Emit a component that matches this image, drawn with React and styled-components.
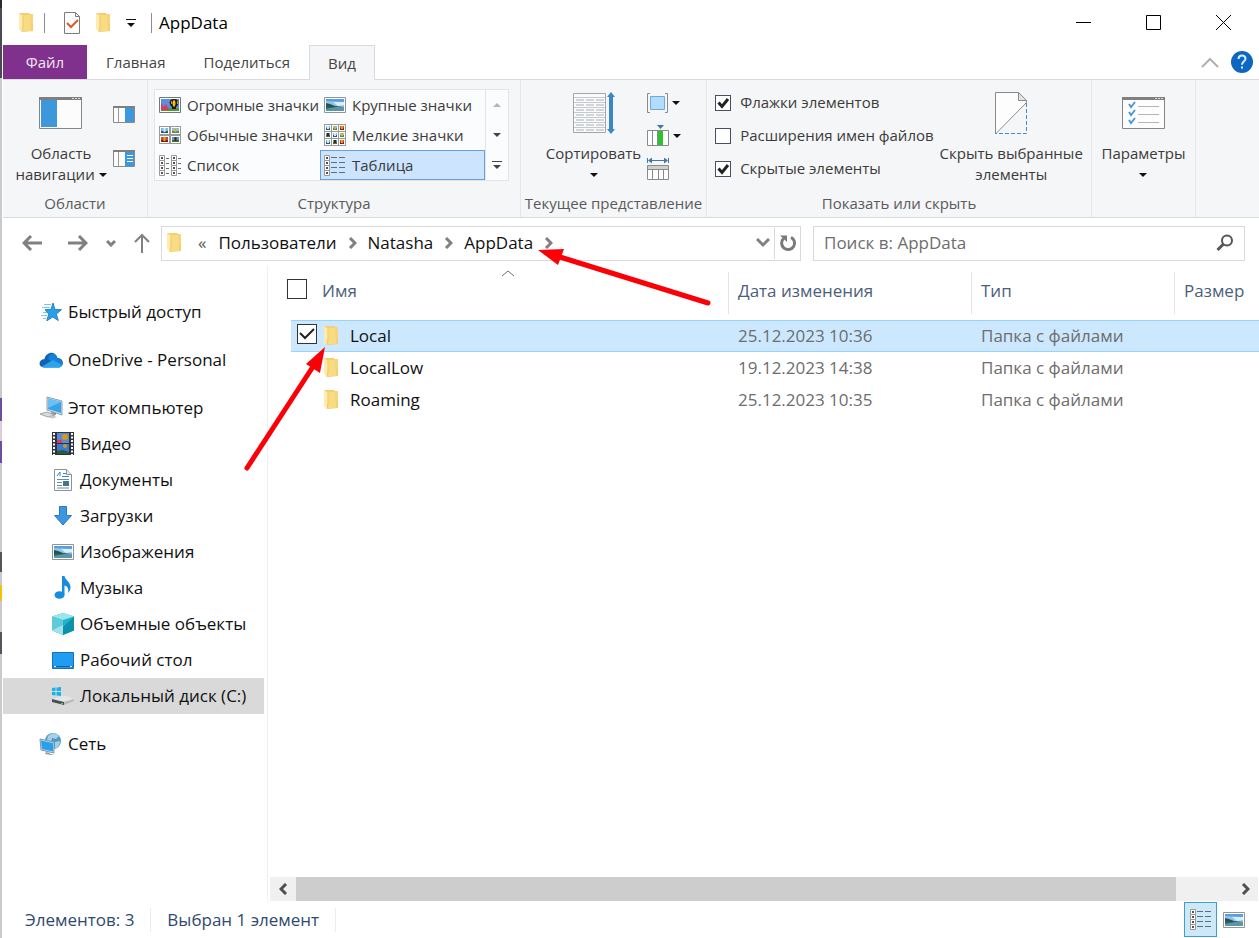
import React from 'react';
import styled, { createGlobalStyle, css } from 'styled-components';

const GlobalStyle = createGlobalStyle`
  *, *::before, *::after { box-sizing: border-box; }
  body {
    margin: 0;
    background: #fff;
    color: #111;
    font: 17px/24px "Open Sans", "Noto Sans", sans-serif;
  }
  button, input { font: inherit; color: inherit; }
  button { padding: 0; border: 0; background: none; cursor: default; }
  a { color: inherit; text-decoration: none; cursor: default; }
  svg { display: block; flex: none; }
`;

/* ---------- Window frame ---------- */

const Frame = styled.div`
  position: relative;
  display: grid;
  grid-template-columns: 3px minmax(0, 1fr);
  min-height: 100vh;
  overflow: hidden;
`;

const DesktopEdge = styled.div`
  margin-right: 1px;
  background: linear-gradient(
    #2b2b2f 0 8px, #4a4a52 8px 78px, #c9cacd 78px 398px,
    #6b4f9c 398px 421px, #d6cfdc 421px 441px, #6b4f9c 441px 463px,
    #c9cacd 463px 552px, #55565c 552px 572px, #c9cacd 572px 585px,
    #f2c20d 585px 601px, #c9cacd 601px 632px, #55565c 632px 654px,
    #c9cacd 654px
  );
`;

const Window = styled.div`
  display: flex;
  flex-direction: column;
  min-width: 0;
`;

/* ---------- Title bar ---------- */

const TitleBar = styled.header`
  display: flex;
  align-items: center;
  height: 45px;
  padding: 0 1px 0 12px;
`;

const QuickAccess = styled.div`
  display: flex;
  align-items: center;
`;

const QuickButton = styled.button`
  display: grid;
  place-items: center;
  width: ${(p) => p.$width}px;
  height: 28px;
`;

const TitleRule = styled.span`
  width: 1px;
  height: 20px;
  background: #8c8c8c;
`;

const Title = styled.h1`
  flex: 1;
  margin: 0 0 0 2px;
  font-size: 17px;
  font-weight: 400;
  line-height: 24px;
  color: #000;
`;

const WindowButton = styled.button`
  display: grid;
  place-items: center;
  width: 70px;
  height: 45px;
`;

/* ---------- Tabs ---------- */

const TabBar = styled.nav`
  display: flex;
  height: 35px;
  padding-right: 6px;
  font-size: 15px;
  border-bottom: 1px solid #dadbdc;
`;

const Tab = styled.button`
  height: 34px;
  padding: 0 19px;
  color: #444;
  ${(p) => p.$file && css`
    width: 84px;
    color: #f3e6f5;
    background: #80308d;
  `}
  ${(p) => p.$active && css`
    height: 35px;
    border: 1px solid #dadbdc;
    border-bottom: 0;
    padding: 0 18px;
    background: #f5f6f7;
  `}
`;

const TabTools = styled.div`
  display: flex;
  align-items: center;
  gap: 12px;
  margin-left: auto;
`;

/* ---------- Ribbon ---------- */

const Ribbon = styled.section`
  display: flex;
  height: 138px;
  font-size: 15px;
  line-height: 21px;
  color: #3b3b3b;
  background: #f5f6f7;
  border-bottom: 1px solid #dadbdc;
`;

const Group = styled.div`
  display: flex;
  flex-direction: column;
  flex: none;
  width: ${(p) => p.$width}px;
  border-right: 1px solid #e4e6e8;
`;

const GroupBody = styled.div`
  display: flex;
  justify-content: ${(p) => (p.$start ? 'flex-start' : 'center')};
  flex: 1;
  gap: ${(p) => p.$gap || 0}px;
  padding: ${(p) => p.$top || 12}px 0 0 ${(p) => p.$start || 0}px;
`;

const GroupLabel = styled.div`
  height: 24px;
  text-align: center;
  white-space: nowrap;
  color: #5a5a5a;
`;

const BigButton = styled.button`
  display: flex;
  flex-direction: column;
  align-items: center;
  align-self: flex-start;
  gap: 9px;
  white-space: nowrap;
`;

const BigIcon = styled.span`
  display: grid;
  place-items: center;
  height: 42px;
`;

const BigText = styled.span`
  display: block;
  svg { display: inline-block; vertical-align: 3px; }
`;

const SmallStack = styled.div`
  display: flex;
  flex-direction: column;
  gap: ${(p) => p.$gap}px;
  padding-top: ${(p) => p.$top || 0}px;
`;

const SmallButton = styled.button`
  display: flex;
  align-items: center;
  gap: 4px;
  height: 22px;
`;

const Gallery = styled.div`
  display: grid;
  grid-template-columns: 165px 165px 23px;
  height: 92px;
  background: #fbfcfd;
  border: 1px solid #e2e4e7;
`;

const GalleryColumn = styled.div`
  display: grid;
  grid-template-rows: repeat(3, 30px);
`;

const GalleryItem = styled.button`
  display: flex;
  align-items: center;
  gap: 6px;
  padding-left: 3px;
  white-space: nowrap;
  border: 1px solid transparent;
  ${(p) => p.$selected && css`
    background: #cce4fd;
    border-color: #6a9fdc;
  `}
`;

const GalleryScroll = styled.div`
  display: grid;
  grid-template-rows: repeat(3, 30px);
  border-left: 1px solid #e2e4e7;
`;

const ScrollCell = styled.button`
  display: grid;
  place-items: center;
`;

const Options = styled.div`
  display: flex;
  flex-direction: column;
  gap: 12px;
`;

const Option = styled.label`
  display: flex;
  align-items: center;
  gap: 9px;
  height: 21px;
  white-space: nowrap;
`;

const CheckShell = styled.span`
  display: inline-grid;
  vertical-align: top;
  width: ${(p) => p.$size}px;
  height: ${(p) => p.$size}px;
  > * { grid-area: 1 / 1; }
  svg { pointer-events: none; place-self: center; }
`;

const CheckInput = styled.input`
  appearance: none;
  width: 100%;
  height: 100%;
  margin: 0;
  background: #fff;
  border: 1px solid ${(p) => p.$line};
`;

/* ---------- Address row ---------- */

const AddressRow = styled.div`
  display: grid;
  grid-template-columns: 146px minmax(0, 640fr) minmax(0, 432fr);
  column-gap: 12px;
  align-items: center;
  height: 48px;
  padding: 2px 14px 0 0;
`;

const NavButtons = styled.div`
  display: flex;
  align-items: center;
  gap: 18px;
  padding-left: 19px;
`;

const HistoryButtons = styled.div`
  display: flex;
  gap: 26px;
`;

const IconButton = styled.button`
  display: grid;
  place-items: center;
  height: 32px;
  min-width: ${(p) => p.$width || 0}px;
`;

const AddressBox = styled.div`
  display: flex;
  align-items: center;
  height: 35px;
  padding-left: 1px;
  border: 1px solid #d9d9d9;
`;

const Crumbs = styled.div`
  display: flex;
  align-items: center;
  flex: 1;
  min-width: 0;
  white-space: nowrap;
`;

const Earlier = styled.span`
  margin: 0 12px 0 11px;
  color: #555;
`;

const CrumbArrow = styled.span`
  display: grid;
  place-items: center;
  width: 31px;
`;

const RefreshButton = styled.button`
  display: grid;
  place-items: center;
  width: 26px;
  height: 31px;
  border-left: 1px solid #d9d9d9;
`;

const SearchBox = styled.label`
  display: flex;
  align-items: center;
  height: 35px;
  padding: 0 10px;
  border: 1px solid #d9d9d9;
`;

const SearchInput = styled.input`
  flex: 1;
  min-width: 0;
  padding: 0;
  border: 0;
  outline: 0;
  background: none;
  &::placeholder { color: #6d6d6d; opacity: 1; }
`;

/* ---------- Main area ---------- */

const Main = styled.main`
  display: grid;
  grid-template-columns: 265px minmax(0, 1fr);
  flex: 1;
`;

const Sidebar = styled.nav`
  display: flex;
  flex-direction: column;
  gap: 12px;
  padding: 28px 3px 0 0;
  border-right: 1px solid #f0f0f0;
`;

const SideGroup = styled.div`
  display: flex;
  flex-direction: column;
`;

const SideItem = styled.a`
  display: flex;
  align-items: center;
  gap: 5px;
  height: 36px;
  padding-left: ${(p) => (p.$child ? 48 : 36)}px;
  white-space: nowrap;
  background: ${(p) => (p.$selected ? '#d9d9d9' : 'transparent')};
`;

const SideIcon = styled.span`
  display: grid;
  place-items: center;
  width: 24px;
  height: 24px;
`;

const Content = styled.section`
  display: flex;
  flex-direction: column;
  min-width: 0;
`;

const SortMark = styled.div`
  display: flex;
  height: 6px;
  padding-left: 234px;
  svg { margin-top: 4px; }
`;

const ListArea = styled.div`
  flex: 1;
  padding-left: 19px;
`;

const FileTable = styled.table`
  width: 100%;
  table-layout: fixed;
  border-collapse: separate;
  border-spacing: 0;
`;

const HeadCell = styled.th`
  height: 48px;
  padding: 0 0 10px ${(p) => p.$pad}px;
  font-weight: 400;
  text-align: left;
  white-space: nowrap;
  color: #4c607a;
  background: ${(p) => (p.$ruled ? 'linear-gradient(#e5e5e5, #e5e5e5) 0 0 / 1px 42px no-repeat' : 'none')};
`;

const FileRow = styled.tr`
  > td {
    background-color: ${(p) => (p.$selected ? '#cce8ff' : 'transparent')};
    box-shadow: ${(p) => (p.$selected ? 'inset 0 1px #99d1ff, inset 0 -1px #99d1ff' : 'none')};
  }
`;

const Cell = styled.td`
  height: 32px;
  padding: 0 0 0 ${(p) => p.$pad}px;
  white-space: nowrap;
  color: ${(p) => (p.$name ? '#111' : '#6d6d6d')};
`;

const CheckCell = styled(Cell)`
  border-left: 4px solid transparent;
  background-clip: padding-box;
`;

const NameLine = styled.span`
  display: flex;
  align-items: center;
  gap: 6px;
`;

const ScrollBar = styled.div`
  display: flex;
  align-items: center;
  height: 24px;
  margin: 0 1px 1px 2px;
  background: #f0f0f0;
`;

const ScrollArrow = styled.button`
  display: grid;
  place-items: center;
  width: 26px;
  height: 24px;
`;

const ScrollTrack = styled.div`
  flex: 1;
  height: 24px;
`;

const ScrollThumb = styled.div`
  width: 94%;
  height: 24px;
  background: #cdcdcd;
`;

/* ---------- Status bar ---------- */

const StatusBar = styled.footer`
  display: flex;
  align-items: center;
  height: 36px;
  padding: 0 9px 0 22px;
  color: #2f4a6d;
`;

const StatusText = styled.span`
  padding-right: 16px;
  margin-right: 16px;
  border-right: 1px solid #ececec;
  white-space: nowrap;
`;

const ViewButtons = styled.div`
  display: flex;
  margin-left: auto;
  align-self: stretch;
`;

const ViewButton = styled.button`
  display: grid;
  place-items: center;
  width: 33px;
  height: 35px;
  border: 1px solid ${(p) => (p.$selected ? '#3d9fc9' : 'transparent')};
  background: ${(p) => (p.$selected ? '#cde8f6' : 'transparent')};
`;

const Annotations = styled.svg`
  position: absolute;
  top: 0;
  left: 0;
  pointer-events: none;
`;

/* ---------- Icons ---------- */

const Folder = () => (
  <svg width="24" height="24" viewBox="0 0 24 24">
    <path d="M4 2h10l1 1h3v17l-10 1z" fill="#f3cf70" />
    <path d="M8 4h8v16H8z" fill="#f9db84" />
    <path d="M15 3h3v10l-3 1z" fill="#f6d57b" />
    <path d="M4 2l4 3v10l-1 6-3-3z" fill="#fdebb0" />
    <path d="M8 5v10l-1 6" fill="none" stroke="#edc964" />
  </svg>
);

const CheckedDoc = () => (
  <svg width="18" height="24" viewBox="0 0 18 24">
    <path d="M1.500 1.500h11l4 4v17h-15z" fill="#fcfcfc" stroke="#7c7c7c" />
    <path d="M12.500 1.500v4h4" fill="none" stroke="#7c7c7c" />
    <path d="M4 12l4 4 7-7" fill="none" stroke="#dd5a28" strokeWidth="2" />
  </svg>
);

const Caret = ({ color = '#111' }) => (
  <svg width="8" height="4" viewBox="0 0 8 4"><path d="M0 0h8L4 4z" fill={color} /></svg>
);

const CaretUp = () => (
  <svg width="8" height="4" viewBox="0 0 8 4"><path d="M0 4h8L4 0z" fill="#b5b5b5" /></svg>
);

const BarCaret = ({ color = '#111' }) => (
  <svg width="10" height="8" viewBox="0 0 10 8">
    <path d="M0 0h10v1H0zM1 4h8L5 8z" fill={color} />
  </svg>
);

const Chevron = ({ d, w, h, color = '#808080', stroke = 3 }) => (
  <svg width={w} height={h} viewBox={`0 0 ${w} ${h}`}>
    <path d={d} fill="none" stroke={color} strokeWidth={stroke} />
  </svg>
);

const Tick = ({ size }) => (
  <svg width={size} height={size} viewBox={`0 0 ${size} ${size}`}>
    <path
      d={size === 16 ? 'M3.500 7.500l3.500 4 6-7.500' : 'M3 9l5 5 9-9'}
      fill="none"
      stroke="#222"
      strokeWidth={size === 16 ? 3 : 2}
    />
  </svg>
);

const NavPane = () => (
  <svg width="43" height="32" viewBox="0 0 43 32">
    <path d="M.5 1.500h42v30H.5z" fill="#fcfcfc" stroke="#868686" />
    <path d="M0 0h43v3H0z" fill="#7f7f7f" />
    <path d="M33 1h2v1h-2zM36 1h2v1h-2zM39 1h2v1h-2z" fill="#ddd" />
    <path d="M2 3h16v27H2z" fill="#3d97dc" />
  </svg>
);

const SidePane = ({ details }) => (
  <svg width="22" height="17" viewBox="0 0 22 17">
    <path d="M.5.5h21v16H.5z" fill="#fcfcfc" stroke="#8a8a8a" />
    <path d="M0 0h22v2H0z" fill="#7f7f7f" />
    <path d="M5.500 2v14" stroke="#999" />
    <path d="M12 2h9v14h-9z" fill="#3d97dc" />
    {details && <path d="M14 5.500h6M14 8.500h6M14 11.500h6" stroke="#fff" />}
  </svg>
);

const Landscape = () => (
  <svg width="22" height="16" viewBox="0 0 22 16">
    <path d="M.5.5h21v15H.5z" fill="#fff" stroke="#8e959c" />
    <path d="M2 2h18v12H2z" fill="#8fc4ef" />
    <path d="M2 2h18v3L2 4z" fill="#5a9ede" />
    <path d="M9 5h11v3l-6 1z" fill="#dceefa" />
    <path d="M2 6l4 1 5 2 9 1v1H2z" fill="#24564f" />
    <path d="M2 10h18v4H2z" fill="#5e95a3" />
    <path d="M2 10h10l-10 2z" fill="#2f6a68" />
  </svg>
);

const HugeIcon = () => (
  <svg width="22" height="16" viewBox="0 0 22 16">
    <path d="M.5.5h21v15H.5z" fill="#fff" stroke="#777" />
    <path d="M2 2h18v12H2z" fill="#5a8fe0" />
    <path d="M2 11h18v3H2z" fill="#4b9a3b" />
    <path d="M2 6l3 4 2-3 3 6H2z" fill="#d93b58" />
    <path d="M15 2c6 0 5 6 2 8v2h-4v-2c-3-2-4-8 2-8z" fill="#23190d" />
    <path d="M15 3c2 1 2 5 0 7-2-2-2-6 0-7z" fill="#f5c51d" />
    <path d="M12 4h1v3h-1zM18 4h1v3h-1z" fill="#e58d1a" />
  </svg>
);

/* A framed thumbnail: sky, ground and a highlight in the middle. */
const Thumb = ({ x, y, w, h, fills }) => (
  <g>
    <rect x={x + 0.5} y={y + 0.5} width={w - 1} height={h - 1} fill="#fff" stroke="#9a9a9a" />
    <rect x={x + 2} y={y + 2} width={w - 4} height={h - 4} fill={fills[0]} />
    <rect x={x + 2} y={y + h - 4} width={w - 4} height="2" fill={fills[1]} />
    <rect x={x + w / 2 - 1} y={y + 2} width="2" height={h - 5} fill={fills[2]} />
  </g>
);

const sky = ['#7db8e8', '#2f5d63', '#d5ebf9'];
const meadow = ['#8fc0dd', '#5f8a3c', '#c9b54a'];
const poppy = ['#d4452a', '#7d2016', '#f09a1e'];
const balloon = ['#5f93d8', '#4a6f2c', '#3a2c12'];

const Tiles2 = () => (
  <svg width="22" height="18" viewBox="0 0 22 18">
    <Thumb x={0} y={0} w={11} h={9} fills={sky} />
    <Thumb x={11} y={0} w={11} h={9} fills={meadow} />
    <Thumb x={0} y={9} w={11} h={9} fills={poppy} />
    <Thumb x={11} y={9} w={11} h={9} fills={balloon} />
  </svg>
);

const Tiles3 = () => (
  <svg width="22" height="22" viewBox="0 0 22 22">
    {[[sky, meadow, poppy], [balloon, sky, meadow], [sky, balloon, poppy]].map((row, r) =>
      row.map((fills, c) => (
        <Thumb key={`${r}${c}`} x={c * 7} y={r * 7} w={8} h={8} fills={fills} />
      )))}
  </svg>
);

const DotColumn = ({ x }) => (
  <g>
    {[0, 1, 2, 3].map((i) => (
      <g key={i}>
        <path d={`M${x + 0.5} ${i * 5 + 0.5}h5v5h-5z`} fill="#fff" stroke="#999" />
        <path d={`M${x + 2} ${i * 5 + 2}h2v2h-2z`} fill="#5a5050" />
      </g>
    ))}
  </g>
);

const ListIcon = () => (
  <svg width="22" height="21" viewBox="0 0 22 21">
    <DotColumn x={0} />
    <DotColumn x={12} />
    <path d="M7 3.500h3M7 8.500h3M7 13.500h3M7 18.500h3M19 3.500h3M19 8.500h3M19 13.500h3M19 18.500h3" stroke="#6d6d6d" />
  </svg>
);

const DetailsIcon = () => (
  <svg width="22" height="21" viewBox="0 0 22 21">
    <DotColumn x={0} />
    <path d="M7 2.500h6M15 2.500h6M7 7.500h6M15 7.500h6M7 12.500h6M15 12.500h6M7 17.500h6M15 17.500h6" stroke="#5b6f80" />
  </svg>
);

const SortIcon = () => (
  <svg width="42" height="42" viewBox="0 0 42 42">
    <path d="M.5 1.500h32v39H.5z" fill="#fafafa" stroke="#a5a5a5" />
    <path d="M1 5.500h31M1 10.500h31M1 15.500h31M1 20.500h31M1 25.500h31M1 30.500h31M1 35.500h31" stroke="#c3c9ce" />
    <path d="M3 8h8M13 8h8M23 8h8M3 13h8M13 13h8M23 13h8M3 18h8M13 18h8M23 18h8M3 23h8M13 23h8M23 23h8M3 28h8M13 28h8M23 28h8M3 33h8M13 33h8M23 33h8M3 38h8M13 38h8M23 38h8" stroke="#a9b0b4" />
    <path d="M38 0l4 5h-2v32h2l-4 5-4-5h2V5h-2z" fill="#3a86c8" />
  </svg>
);

const GroupByIcon = () => (
  <svg width="21" height="20" viewBox="0 0 21 20">
    <path d="M3 .5H.5v19H3M18 .5h2.500v19H18" fill="none" stroke="#8a8a8a" />
    <path d="M3.500 3.500h14v13h-14z" fill="#b1dcfb" stroke="#6fa9d8" />
  </svg>
);

const AddColumnIcon = () => (
  <svg width="22" height="22" viewBox="0 0 22 22">
    <path d="M.5 5.500h21v15H.5zM5.500 6v15M10.500 6v15" fill="#fff" stroke="#8a8a8a" />
    <path d="M11 6h5v14h-5z" fill="#2bc52b" />
    <path d="M10 0h7l-3.500 4z" fill="#3f77ad" />
  </svg>
);

const FitColumnsIcon = () => (
  <svg width="22" height="22" viewBox="0 0 22 22">
    <path d="M.5 0v5M21.500 0v5M2 2.500h18" stroke="#3f77ad" />
    <path d="M1 2.500l4-3v6zM21 2.500l-4-3v6z" fill="#3f77ad" />
    <path d="M.5 7.500h21v14H.5zM5.500 11v10M11.500 11v10M16.500 11v10" fill="#fff" stroke="#8a8a8a" />
    <path d="M1 8h20v3H1z" fill="#cfcfcf" />
    <path d="M0 11.500h22" stroke="#8a8a8a" />
  </svg>
);

const HideIcon = () => (
  <svg width="33" height="43" viewBox="0 0 33 43">
    <path d="M.5.5h23l8 8v2L.5 42z" fill="#fdfdfd" stroke="#8a8a8a" />
    <path d="M23.500.5v8h8z" fill="#e4e4e4" stroke="#8a8a8a" />
    <path d="M31.500 11v30.500H1" fill="none" stroke="#3f8fd0" strokeDasharray="4 2" />
  </svg>
);

const OptionsIcon = () => (
  <svg width="43" height="32" viewBox="0 0 43 32">
    <path d="M.5.5h42v31H.5z" fill="#fdfdfd" stroke="#868686" />
    <path d="M0 0h43v3H0z" fill="#7f7f7f" />
    <path d="M33 1h2v1h-2zM36 1h2v1h-2zM39 1h2v1h-2z" fill="#ddd" />
    <path d="M16 9.500h21M16 17.500h21M16 25.500h21" stroke="#b5b5b5" />
    <path d="M7 7l2 3 4-5M7 15l2 3 4-5M7 23l2 3 4-5" fill="none" stroke="#4a9bdc" strokeWidth="2" />
  </svg>
);

const HelpIcon = () => (
  <svg width="22" height="22" viewBox="0 0 22 22">
    <circle cx="11" cy="11" r="11" fill="#0d66bf" />
    <path d="M7.500 8c0-4.500 7-4.500 7-.3 0 2.800-3.500 3-3.500 6" fill="none" stroke="#d8ecff" strokeWidth="2" />
    <path d="M10 15.500h2v2h-2z" fill="#d8ecff" />
  </svg>
);

const Arrow = ({ d, w = 20, h = 16, stroke = 3 }) => (
  <svg width={w} height={h} viewBox={`0 0 ${w} ${h}`}>
    <path d={d} fill="none" stroke="#808080" strokeWidth={stroke} />
  </svg>
);

const Refresh = () => (
  <svg width="18" height="18" viewBox="0 0 18 18">
    <path d="M12 3.300A6.500 6.500 0 1 1 4.500 4.500" fill="none" stroke="#7a7a7a" strokeWidth="3" />
    <path d="M1 1.500h7v6.500z" fill="#7a7a7a" />
  </svg>
);

const Magnifier = () => (
  <svg width="18" height="18" viewBox="0 0 18 18">
    <circle cx="11" cy="6.500" r="5" fill="none" stroke="#555" strokeWidth="2" />
    <path d="M7.500 10l-6 6" stroke="#555" strokeWidth="3" />
  </svg>
);

const Star = () => (
  <svg width="24" height="24" viewBox="0 0 24 24">
    <path d="M14 3l2 6.500 6.500.2-5.200 4.300 2 6.500-5.500-3.500-6 3.800 2-6.800L6 9.700l6-.3z" fill="#2d9ee6" stroke="#1f86cc" />
    <path d="M5 4.500h7M3 7.500h8M4 12.500h4M2 15.500h6M4 18.500h3" stroke="#7cc6f2" />
  </svg>
);

const Cloud = () => (
  <svg width="24" height="24" viewBox="0 0 24 24">
    <path d="M5.500 11C7 4 16 2 18.500 10c7 0 7 9.500 1 9.500H5C-1 19.500-1 11.500 5.500 11z" fill="#0f62b8" />
    <path d="M10 8c3-5 8-1 8.500 2.500C24 11 24 17 21 19L9 11z" fill="#1581d6" />
    <path d="M3 18.500L14 12l9 5c-1 2-2 2.500-3.500 2.500H5c-1 0-1.500-.5-2-1z" fill="#2ba3ee" />
  </svg>
);

const Computer = () => (
  <svg width="24" height="24" viewBox="0 0 24 24">
    <path d="M8 1l15 4v14L8 14z" fill="#d3d8dc" stroke="#8ba3b8" />
    <path d="M9 2.500L22 6v11L9 13z" fill="#35a2ea" />
    <path d="M9 2.500L22 6 9 12z" fill="#69c2f5" />
    <path d="M12 16l5 1v2l-5-1z" fill="#8c9094" />
    <path d="M1 18l7-2 8 3-7 2z" fill="#dadada" stroke="#a4a4a4" />
    <path d="M10 21l5-1 3 1-5 1.500z" fill="#c0c0c0" />
  </svg>
);

const Video = () => (
  <svg width="22" height="24" viewBox="0 0 22 24">
    <path d="M0 0h22v23H0z" fill="#30343a" />
    <path d="M5 1h12v10H5z" fill="#5a8ad6" />
    <path d="M5 12h12v10H5z" fill="#3d78d4" />
    <path d="M5 8h5v3H5z" fill="#d93b68" />
    <circle cx="13" cy="5" r="3" fill="#d49a18" />
    <path d="M5 19l6-1 6 2v2H5z" fill="#255c3c" />
    <circle cx="13" cy="14" r="2" fill="#c39c1f" />
    <path d="M2 1v22M20 1v22" stroke="#fff" strokeWidth="2" strokeDasharray="2 1.500" />
  </svg>
);

const Documents = () => (
  <svg width="18" height="22" viewBox="0 0 18 22">
    <path d="M.5.5h12l5 5v16H.5z" fill="#fff" stroke="#8a9299" />
    <path d="M12.500.5v5h5" fill="#e9edf0" stroke="#8a9299" />
    <path d="M3 7l3-4v4M9 4.500h3M8 7.500h7" fill="none" stroke="#2e8cd3" />
    <path d="M3 10.500h12M3 13.500h5M3 16.500h5M3 19h12" stroke="#72899b" />
    <path d="M9 12h6v5H9z" fill="#45758f" />
  </svg>
);

const Download = () => (
  <svg width="20" height="22" viewBox="0 0 20 22">
    <path d="M6.500 1.500h7v9h5L10 20l-8.500-9.500h5z" fill="#3c96e0" stroke="#2879bf" />
  </svg>
);

const Music = () => (
  <svg width="20" height="24" viewBox="0 0 20 24">
    <path d="M9 0h2.500c.5 4 6.500 6 6 12-.2 2-1 3.500-2.500 5 .8-4 0-6.500-3.500-7.500V19H9z" fill="#178de0" />
    <ellipse cx="6.500" cy="19" rx="5" ry="3.800" fill="#178de0" />
  </svg>
);

const Cube = () => (
  <svg width="22" height="22" viewBox="0 0 22 22">
    <path d="M11 0l11 3.500v14L11 22 0 17.500v-14z" fill="#21b3cc" />
    <path d="M11 0l11 3.500L11 7 0 3.500z" fill="#9be6ec" />
    <path d="M0 3.500L11 7v15L0 17.500z" fill="#5fcbd8" />
    <path d="M0 17.500L11 12v10z" fill="#a4e2e8" />
    <path d="M22 3.500v14L11 22v-8z" fill="#0d91ad" />
  </svg>
);

const Desktop = () => (
  <svg width="22" height="17" viewBox="0 0 22 17">
    <path d="M.5.5h21v16H.5z" fill="#209cf2" stroke="#1a6fb3" />
    <path d="M1 14.500h20" stroke="#1c5e98" />
    <path d="M2 14h2v1H2zM18 14h2v1h-2z" fill="#fff" />
  </svg>
);

const Disk = () => (
  <svg width="22" height="18" viewBox="0 0 22 18">
    <path d="M0 1l3.500-.5V4H0zM4.500.4L9 0v4H4.500zM0 5h3.500v3.500L0 8zM4.500 5H9v4l-4.500-.5z" fill="#19b1ea" />
    <path d="M0 12l11-3h4l7 3-10 3z" fill="#e3e5e6" />
    <path d="M0 12l12 3v3L0 15z" fill="#4b4e50" />
    <path d="M12 15l10-3v2l-10 4z" fill="#b6b8b9" />
    <path d="M9 16h2v1H9z" fill="#54d15a" />
  </svg>
);

const Network = () => (
  <svg width="24" height="24" viewBox="0 0 24 24">
    <circle cx="14" cy="9" r="8" fill="#4c99c9" />
    <path d="M9 4c5-4 8-3 11 0l-3 3-4-1-1 4-4-2zM16 10l5-1c0 4-2 6-5 8z" fill="#a8cfe4" />
    <path d="M1 7l14 3v11L2 18z" fill="#cfd9e0" stroke="#7998ad" />
    <path d="M2 8.500l12 2.500v8.500L3 17z" fill="#28a0ee" />
    <path d="M7 20l4 1v1h4l-3 1-6-1z" fill="#9aa0a4" />
  </svg>
);

/* ---------- Pieces ---------- */

const Check = ({ size, checked, line = '#333', label }) => (
  <CheckShell $size={size}>
    <CheckInput type="checkbox" defaultChecked={checked} aria-label={label} $line={line} />
    {checked && <Tick size={size} />}
  </CheckShell>
);

const places = [
  [{ text: 'Быстрый доступ', icon: <Star /> }],
  [{ text: 'OneDrive - Personal', icon: <Cloud /> }],
  [
    { text: 'Этот компьютер', icon: <Computer /> },
    { text: 'Видео', icon: <Video />, child: true },
    { text: 'Документы', icon: <Documents />, child: true },
    { text: 'Загрузки', icon: <Download />, child: true },
    { text: 'Изображения', icon: <Landscape />, child: true },
    { text: 'Музыка', icon: <Music />, child: true },
    { text: 'Объемные объекты', icon: <Cube />, child: true },
    { text: 'Рабочий стол', icon: <Desktop />, child: true },
    { text: 'Локальный диск (C:)', icon: <Disk />, child: true, selected: true },
  ],
  [{ text: 'Сеть', icon: <Network /> }],
];

const files = [
  { name: 'Local', date: '25.12.2023 10:36', selected: true },
  { name: 'LocalLow', date: '19.12.2023 14:38' },
  { name: 'Roaming', date: '25.12.2023 10:35' },
];

const crumbs = ['Пользователи', 'Natasha', 'AppData'];

const RibbonBar = () => (
  <Ribbon>
    <Group $width={145}>
      <GroupBody $gap={6}>
        <BigButton>
          <BigIcon><NavPane /></BigIcon>
          <BigText>Область<br />навигации <Caret /></BigText>
        </BigButton>
        <SmallStack $gap={22} $top={11}>
          <SmallButton aria-label="Область просмотра"><SidePane /></SmallButton>
          <SmallButton aria-label="Область сведений"><SidePane details /></SmallButton>
        </SmallStack>
      </GroupBody>
      <GroupLabel>Области</GroupLabel>
    </Group>
    <Group $width={373}>
      <GroupBody $top={9} $start={6}>
        <Gallery>
          <GalleryColumn>
            <GalleryItem><HugeIcon />Огромные значки</GalleryItem>
            <GalleryItem><Tiles2 />Обычные значки</GalleryItem>
            <GalleryItem><ListIcon />Список</GalleryItem>
          </GalleryColumn>
          <GalleryColumn>
            <GalleryItem><Landscape />Крупные значки</GalleryItem>
            <GalleryItem><Tiles3 />Мелкие значки</GalleryItem>
            <GalleryItem $selected><DetailsIcon />Таблица</GalleryItem>
          </GalleryColumn>
          <GalleryScroll>
            <ScrollCell aria-label="Вверх"><CaretUp /></ScrollCell>
            <ScrollCell aria-label="Вниз"><Caret color="#444" /></ScrollCell>
            <ScrollCell aria-label="Дополнительно"><BarCaret color="#444" /></ScrollCell>
          </GalleryScroll>
        </Gallery>
      </GroupBody>
      <GroupLabel>Структура</GroupLabel>
    </Group>
    <Group $width={186}>
      <GroupBody $gap={6}>
        <BigButton>
          <BigIcon><SortIcon /></BigIcon>
          <BigText>Сортировать<br /><Caret /></BigText>
        </BigButton>
        <SmallStack $gap={11}>
          <SmallButton aria-label="Группировать"><GroupByIcon /><Caret /></SmallButton>
          <SmallButton aria-label="Добавить столбцы"><AddColumnIcon /><Caret /></SmallButton>
          <SmallButton aria-label="Размер столбцов"><FitColumnsIcon /></SmallButton>
        </SmallStack>
      </GroupBody>
      <GroupLabel>Текущее представление</GroupLabel>
    </Group>
    <Group $width={385}>
      <GroupBody $gap={6}>
        <Options>
          <Option><Check size={16} checked line="#4d4d66" />Флажки элементов</Option>
          <Option><Check size={16} line="#4d4d66" />Расширения имен файлов</Option>
          <Option><Check size={16} checked line="#4d4d66" />Скрытые элементы</Option>
        </Options>
        <BigButton>
          <BigIcon><HideIcon /></BigIcon>
          <BigText>Скрыть выбранные<br />элементы</BigText>
        </BigButton>
      </GroupBody>
      <GroupLabel>Показать или скрыть</GroupLabel>
    </Group>
    <Group $width={104}>
      <GroupBody>
        <BigButton>
          <BigIcon><OptionsIcon /></BigIcon>
          <BigText>Параметры<br /><Caret /></BigText>
        </BigButton>
      </GroupBody>
    </Group>
  </Ribbon>
);

export default function App() {
  return (
    <>
      <GlobalStyle />
      <Frame>
        <DesktopEdge />
        <Window>
          <TitleBar>
            <QuickAccess>
              <QuickButton $width={20} aria-label="Папка"><Folder /></QuickButton>
              <QuickButton as="span" $width={18}><TitleRule /></QuickButton>
              <QuickButton $width={38} aria-label="Свойства"><CheckedDoc /></QuickButton>
              <QuickButton $width={26} aria-label="Новая папка"><Folder /></QuickButton>
              <QuickButton $width={28} aria-label="Настройка панели"><BarCaret /></QuickButton>
            </QuickAccess>
            <QuickButton as="span" $width={12}><TitleRule /></QuickButton>
            <Title>AppData</Title>
            <WindowButton aria-label="Свернуть"><Chevron w={15} h={2} d="M0 .5h15" color="#000" stroke={1} /></WindowButton>
            <WindowButton aria-label="Развернуть"><Chevron w={15} h={15} d="M.5.5h14v14H.5z" color="#000" stroke={1} /></WindowButton>
            <WindowButton aria-label="Закрыть"><Chevron w={15} h={15} d="M0 0l15 15M15 0L0 15" color="#000" stroke={1} /></WindowButton>
          </TitleBar>
          <TabBar>
            <Tab $file>Файл</Tab>
            <Tab>Главная</Tab>
            <Tab>Поделиться</Tab>
            <Tab $active>Вид</Tab>
            <TabTools>
              <IconButton aria-label="Свернуть ленту"><Chevron w={18} h={11} d="M1 10l8-8 8 8" color="#b0b0b0" stroke={2} /></IconButton>
              <IconButton aria-label="Справка"><HelpIcon /></IconButton>
            </TabTools>
          </TabBar>
          <RibbonBar />
          <AddressRow>
            <NavButtons>
              <HistoryButtons>
                <IconButton aria-label="Назад"><Arrow d="M9 1L2 8l7 7M2 8h18" /></IconButton>
                <IconButton aria-label="Вперед"><Arrow d="M11 1l7 7-7 7M18 8H0" /></IconButton>
              </HistoryButtons>
              <IconButton aria-label="Последние расположения"><Chevron w={10} h={7} d="M1 1l4 4 4-4" /></IconButton>
              <IconButton aria-label="Вверх"><Arrow w={16} h={20} d="M1 9l7-7 7 7M8 2v18" stroke={2} /></IconButton>
            </NavButtons>
            <AddressBox>
              <Crumbs>
                <Folder />
                <Earlier>«</Earlier>
                {crumbs.map((name) => (
                  <React.Fragment key={name}>
                    <a href="#path">{name}</a>
                    <CrumbArrow><Chevron w={9} h={12} d="M2 1l5 5-5 5" /></CrumbArrow>
                  </React.Fragment>
                ))}
              </Crumbs>
              <IconButton $width={23} aria-label="Предыдущие расположения"><Chevron w={14} h={10} d="M1 1l6 6 6-6" /></IconButton>
              <RefreshButton aria-label="Обновить"><Refresh /></RefreshButton>
            </AddressBox>
            <SearchBox>
              <SearchInput type="text" placeholder="Поиск в: AppData" aria-label="Поиск" />
              <Magnifier />
            </SearchBox>
          </AddressRow>
          <Main>
            <Sidebar>
              {places.map((group) => (
                <SideGroup key={group[0].text}>
                  {group.map((item) => (
                    <SideItem key={item.text} href="#place" $child={item.child} $selected={item.selected}>
                      <SideIcon>{item.icon}</SideIcon>
                      {item.text}
                    </SideItem>
                  ))}
                </SideGroup>
              ))}
            </Sidebar>
            <Content>
              <SortMark><Chevron w={12} h={7} d="M0 6l6-5 6 5" color="#6d6d6d" stroke={1} /></SortMark>
              <ListArea>
                <FileTable>
                  <colgroup>
                    <col style={{ width: 33 }} />
                    <col />
                    <col style={{ width: 243 }} />
                    <col style={{ width: 203 }} />
                    <col style={{ width: 85 }} />
                  </colgroup>
                  <thead>
                    <tr>
                      <HeadCell $pad={0}><Check size={20} label="Выбрать все" /></HeadCell>
                      <HeadCell $pad={2}>Имя</HeadCell>
                      <HeadCell $pad={10} $ruled>Дата изменения</HeadCell>
                      <HeadCell $pad={10} $ruled>Тип</HeadCell>
                      <HeadCell $pad={10} $ruled>Размер</HeadCell>
                    </tr>
                  </thead>
                  <tbody>
                    {files.map((file) => (
                      <FileRow key={file.name} $selected={file.selected}>
                        <CheckCell $pad={6}>
                          {file.selected && <Check size={20} checked label={file.name} />}
                        </CheckCell>
                        <Cell $pad={0} $name><NameLine><Folder />{file.name}</NameLine></Cell>
                        <Cell $pad={10}>{file.date}</Cell>
                        <Cell $pad={10}>Папка с файлами</Cell>
                        <Cell $pad={10} />
                      </FileRow>
                    ))}
                  </tbody>
                </FileTable>
              </ListArea>
              <ScrollBar>
                <ScrollArrow aria-label="Влево"><Chevron w={9} h={12} d="M7 1L2 6l5 5" color="#505050" /></ScrollArrow>
                <ScrollTrack><ScrollThumb /></ScrollTrack>
                <ScrollArrow aria-label="Вправо"><Chevron w={9} h={12} d="M2 1l5 5-5 5" color="#505050" /></ScrollArrow>
              </ScrollBar>
            </Content>
          </Main>
          <StatusBar>
            <StatusText>Элементов: 3</StatusText>
            <StatusText>Выбран 1 элемент</StatusText>
            <ViewButtons>
              <ViewButton $selected aria-label="Таблица"><DetailsIcon /></ViewButton>
              <ViewButton aria-label="Крупные значки"><Landscape /></ViewButton>
            </ViewButtons>
          </StatusBar>
        </Window>
        <Annotations width="720" height="480" viewBox="0 0 720 480">
          <path d="M708 303L560 257M247 468L316 362" stroke="#fb0007" strokeWidth="5" strokeLinecap="round" />
          <path d="M538 250l26-1-6 16zM325 347l-5 26-14-9z" fill="#fb0007" />
        </Annotations>
      </Frame>
    </>
  );
}
